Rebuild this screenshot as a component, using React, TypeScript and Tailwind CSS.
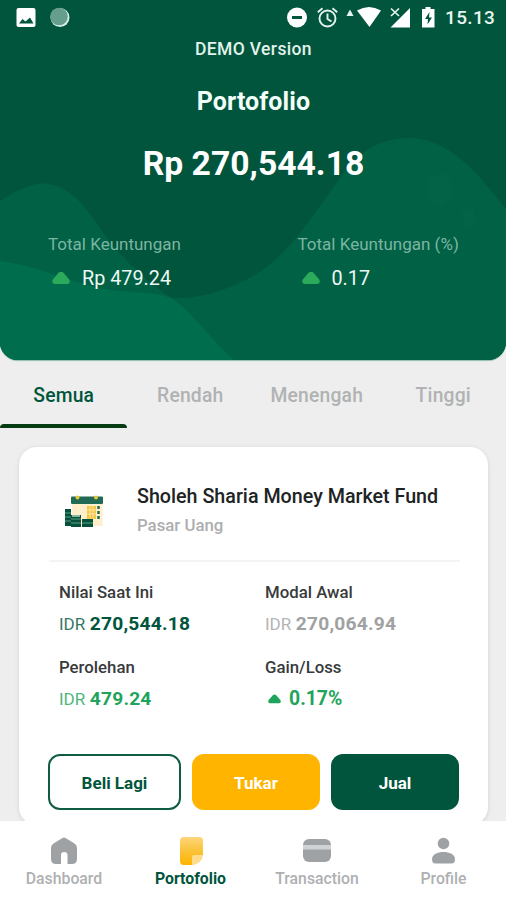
import type { ReactNode } from "react";

const font = "font-['Roboto',sans-serif]";

function StatusBar() {
  return (
    <div className="flex h-[35px] items-center justify-between">
      <svg className="h-[35px] w-[80px]" viewBox="0 0 80 35">
        <rect x="16.500" y="8" width="19" height="19" rx="2" fill="#fff" />
        <path d="M19 23.500l3.500-4.500 3 2.500 4.500-4 3.500 6z" fill="#00553c" />
        <circle cx="60" cy="17.500" r="9.500" fill="#d5eee6" />
        <circle cx="59" cy="16.500" r="8.800" fill="#659e8c" />
      </svg>
      <div className="flex items-center">
        <svg className="h-[35px] w-[160px]" viewBox="280 0 160 35">
          <circle cx="297" cy="17.500" r="10" fill="#fff" />
          <rect x="292" y="16" width="10" height="3" fill="#00553c" />
          <g fill="none" stroke="#e4f3ee" strokeWidth="1.900">
            <circle cx="327.500" cy="18.500" r="8" />
            <path d="M327.500 13.500v5.500l4 2.500M317.800 12.200l4.700-4M337.200 12.200l-4.700-4" />
          </g>
          <path d="M346.500 16l3.500-6.500 3.500 6.500z" fill="#e4f3ee" />
          <path d="M357 10.500Q369 3.500 381 10.500L369.500 27z" fill="#fff" />
          <path d="M410 8v19.500h-19.500z" fill="#fff" />
          <path d="M391 8.500l8 7.500M399 8.500l-8 7.500" stroke="#00553c" strokeWidth="4" />
          <path d="M391 8.500l8 7.500M399 8.500l-8 7.500" stroke="#e4f3ee" strokeWidth="1.700" />
          <path d="M425.500 7h5v2h4v18.500h-12.500V9h3.500z" fill="#fff" />
          <path d="M429.500 12l-4.500 7h3l-.5 5.500 4.500-7h-3z" fill="#00553c" />
        </svg>
        <span className="w-[66px] pl-[5px] text-[19px] leading-[36px] font-medium tracking-[0.35px] text-[#e9f5f1]">15.13</span>
      </div>
    </div>
  );
}

function Up({ className, fill }: { className: string; fill: string }) {
  return (
    <svg className={className} viewBox="0 0 18 14">
      <path d="M7 1.300Q9 0 11 1.300L17.200 8.500Q19 12.500 15.500 13H2.500Q-1 12.500.8 8.500z" fill={fill} />
    </svg>
  );
}

function Summary({ label, value, className }: { label: string; value: string; className: string }) {
  return (
    <div className={className}>
      <div className="text-[17px] leading-[30px] text-[#7cb5a2]">{label}</div>
      <div className="mt-[3px] flex h-[34px] items-center">
        <Up className="mb-0.5 ml-[4px] h-[14px] w-[18px]" fill="#2baa5c" />
        <span className="ml-[12px] text-[19.800px] text-[#edf8f4]">{value}</span>
      </div>
    </div>
  );
}

function Header() {
  return (
    <header className="relative h-[360px] shrink-0 overflow-hidden rounded-b-[18px] bg-[#00553c] shadow-[0_1px_1px_#8dbcac]">
      <svg className="absolute inset-0 h-full w-full" viewBox="0 0 506 360">
        <path
          d="M0 201C22 187 36 182 49 184C66 187 78 197 92 217C115 251 142 280 172 298C205 299 234 287 258 273C296 249 320 202 347 169C367 144 389 138 410 138C450 139 478 173 506 209V360H0z"
          fill="#006145"
        />
        <path d="M0 261C37 266 62 279 99 288C130 294 153 291 171 298C190 310 206 334 234 360H0z" fill="#006d4c" />
        <path d="M428 180q8-8 17-6 9 10 9 22l-12 9q-12-4-16-8zM461 213l12-5 4 16-10 5z" fill="#08694c" opacity=".3" />
      </svg>
      <div className="relative">
        <StatusBar />
        <div className="pl-px text-center text-[17.500px] leading-[28px] font-medium tracking-[0.35px] text-[#e2f3ed]">DEMO Version</div>
        <h1 className="pt-px pl-px text-center text-[25px] leading-[76px] font-bold tracking-[0.1px] text-[#f3fffb]">Portofolio</h1>
        <div className="pl-px text-center text-[33.700px] leading-[48px] font-bold text-white">Rp 270,544.18</div>
        <div className="mt-[41px] flex">
          <Summary className="ml-12 w-[249.500px]" label="Total Keuntungan" value="Rp 479.24" />
          <Summary className="w-[200px]" label="Total Keuntungan (%)" value="0.17" />
        </div>
      </div>
    </header>
  );
}

function Tabs() {
  return (
    <nav className="grid h-[68px] shrink-0 grid-cols-4 text-center text-[19.300px] leading-[72px] font-medium tracking-[0.2px] text-[#b0b2b3]">
      <div className="flex flex-col text-[#00553c]">
        <span className="h-[64px] pl-px">Semua</span>
        <i className="h-[4px] rounded-t-[4px] bg-[#063c14]" />
      </div>
      <span className="pl-px">Rendah</span>
      <span className="pl-px">Menengah</span>
      <span className="pl-px">Tinggi</span>
    </nav>
  );
}

function FundIcon() {
  return (
    <svg className="h-[36px] w-[42px]" viewBox="0 0 42 36">
      <rect x="8" y="6" width="30.500" height="27" fill="#fff0cb" />
      <rect x="7" y="3.500" width="32" height="7.500" rx="1" fill="#216b56" />
      <circle cx="13.500" cy="4.500" r="2" fill="#e8c53a" />
      <circle cx="32" cy="4.500" r="2" fill="#e8c53a" />
      <rect x="23" y="13" width="9" height="13" fill="#f5c642" />
      <path d="M26 13v13M29 13v13M23 17h9M23 21h9" stroke="#fff0cb" strokeWidth=".7" />
      <path d="M34.500 13v13" stroke="#216b56" strokeWidth="2.500" strokeDasharray="3 2" />
      <path d="M1 16h6v17H1zM7 22h10v12H7zM18 26h11v8H18z" fill="#07513c" />
      <path d="M1 20h6M1 24h6M1 28h6M7 26h10M7 30h10M18 30h11" stroke="#5ca087" strokeWidth="1" />
      <rect x="8" y="22" width="8" height="2" fill="#82bba0" />
    </svg>
  );
}

function Stat({ label, children }: { label: string; children: ReactNode }) {
  return (
    <div className="h-[75px]">
      <div className="text-[16.800px] leading-[26px] font-medium text-[#383b3b]">{label}</div>
      <div className="mt-[6px] flex h-[26px] items-center">{children}</div>
    </div>
  );
}

function Amount({ value, className }: { value: string; className: string }) {
  return (
    <span className={`text-[19.200px] ${className}`}>
      <span className="text-[17px] opacity-80">IDR</span>
      <span className="ml-[4.500px] font-bold tracking-[0.2px]">{value}</span>
    </span>
  );
}

function Card() {
  return (
    <section className="mt-[19px] ml-[19px] h-[378px] w-[469px] shrink-0 rounded-[18px] bg-white shadow-[0_1px_4px_#d2d2d2]">
      <div className="mr-[28px] ml-[30px] flex h-[115px] border-b-2 border-[#f4f4f4]">
        <div className="mt-[46px] ml-[15px] w-[73px]">
          <FundIcon />
        </div>
        <div>
          <h2 className="mt-[36px] text-[19.700px] leading-[28px] font-medium text-[#202323]">Sholeh Sharia Money Market Fund</h2>
          <div className="mt-px text-[16.800px] leading-[26px] font-medium text-[#acaeaf]">Pasar Uang</div>
        </div>
      </div>
      <div className="mt-[17px] ml-10 grid grid-cols-[206px_1fr]">
        <Stat label="Nilai Saat Ini"><Amount value="270,544.18" className="text-[#00553c]" /></Stat>
        <Stat label="Modal Awal"><Amount value="270,064.94" className="text-[#9fa2a3]" /></Stat>
        <Stat label="Perolehan"><Amount value="479.24" className="text-[#1fa45b]" /></Stat>
        <Stat label="Gain/Loss">
          <Up className="ml-[3px] h-[10px] w-[13px]" fill="#1fa45b" />
          <span className="ml-2 text-[19.400px] font-bold text-[#1fa45b]">0.17%</span>
        </Stat>
      </div>
      <div className="mt-[25px] ml-[29px] flex gap-[11px] text-center text-[17px] leading-[58px] font-bold text-white">
        <button className="h-[56px] w-[133px] rounded-[12px] border-2 border-[#105b43] leading-[54px] text-[#00553c]">Beli Lagi</button>
        <button className="h-[56px] w-[128px] rounded-[12px] bg-[#ffb400]">Tukar</button>
        <button className="h-[56px] w-[128px] rounded-[12px] bg-[#00553c]">Jual</button>
      </div>
    </section>
  );
}

function NavItem({ label, active, children }: { label: string; active?: boolean; children: ReactNode }) {
  return (
    <div className={`flex flex-1 flex-col items-center pt-[14px] pl-[1.500px] text-[15.800px] leading-[24px] ${active ? "font-bold text-[#00553c]" : "font-medium text-[#aeb0b2]"}`}>
      <svg className="h-[32px] w-[32px]" viewBox="0 0 32 32">{children}</svg>
      <span>{label}</span>
    </div>
  );
}

function BottomNav() {
  return (
    <nav className="flex h-[79px] bg-white">
      <NavItem label="Dashboard">
        <path d="M14 3.200Q16 1.700 18 3.200L26.500 8.500Q29 10 29 13V24Q29 29 24 29H19.500V20Q19.500 17 16.200 17T13 20V29H8Q3 29 3 24V13Q3 10 5.500 8.500z" fill="#9fa2a4" />
      </NavItem>
      <NavItem label="Portofolio" active>
        <defs>
          <linearGradient id="note" x2="0" y2="1">
            <stop stopColor="#ffd67b" />
            <stop offset=".5" stopColor="#fac238" />
            <stop offset="1" stopColor="#ffb400" />
          </linearGradient>
        </defs>
        <path d="M8.500 2H24.500Q28 2 28 6V20L18 30H8.500Q5 30 5 26V6Q5 2 8.500 2z" fill="url(#note)" />
        <path d="M28 20H19Q17 20 17 22V30Q27 29 28 20z" fill="#ffdc8d" />
      </NavItem>
      <NavItem label="Transaction">
        <rect x="2" y="4" width="28" height="23" rx="6" fill="#9fa2a4" />
        <rect x="2" y="10" width="28" height="4.500" fill="#d1d2d3" />
      </NavItem>
      <NavItem label="Profile">
        <circle cx="15.500" cy="8.500" r="5.800" fill="#9fa2a4" />
        <path d="M4 24C4 14.500 27 14.500 27 24Q27 28.500 23.500 28.500H7.500Q4 28.500 4 24z" fill="#9fa2a4" />
      </NavItem>
    </nav>
  );
}

export default function App() {
  return (
    <div className={`flex h-[900px] w-[506px] flex-col overflow-hidden bg-[#eeeeee] ${font}`}>
      <main className="flex h-[821px] shrink-0 flex-col overflow-hidden">
        <Header />
        <Tabs />
        <Card />
      </main>
      <BottomNav />
    </div>
  );
}
